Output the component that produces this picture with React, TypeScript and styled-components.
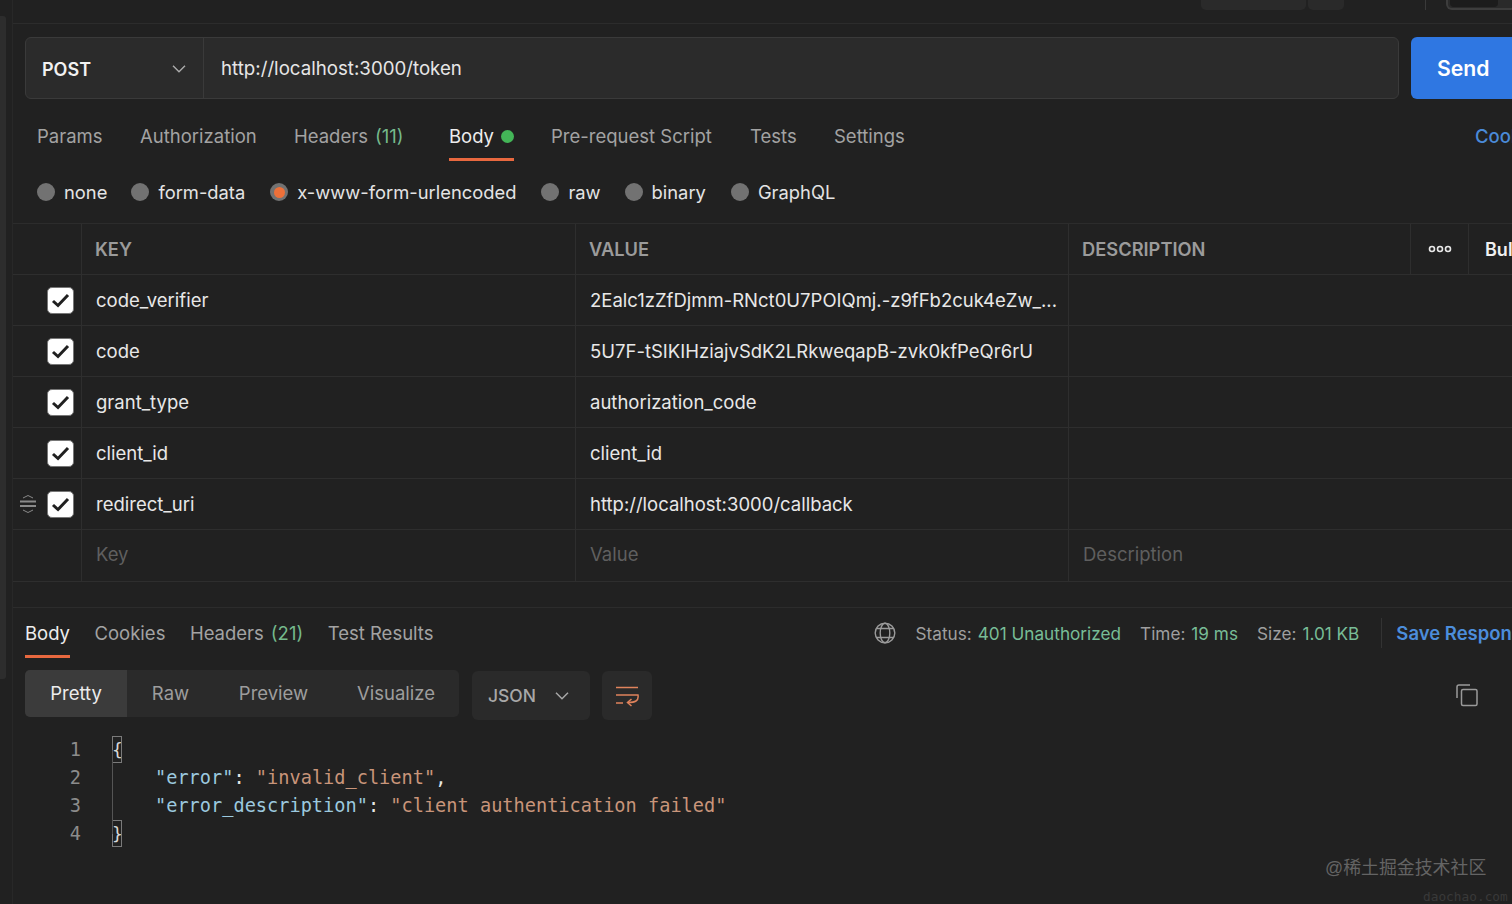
import React from "react";
import styled, { createGlobalStyle } from "styled-components";

const Global = createGlobalStyle`
  html, body { margin: 0; padding: 0; height: 100%; background: #212121; overflow: hidden; }
  body { font-family: Inter, "Liberation Sans", sans-serif; -webkit-font-smoothing: antialiased; }
  #root { height: 904px; }
`;

const line = "#2c2c2c";
const cellLine = "#2e2e2e";

const Page = styled.div`
  position: relative; display: flex; width: 1512px; height: 904px; overflow: hidden; background: #212121;
`;
const Rail = styled.div`
  flex: 0 0 12px; display: flex; border-right: 1px solid #282828; box-sizing: content-box;
`;
const RailBar = styled.div`
  width: 6px; height: 663px; margin-top: 16px; background: #2d2d2d; border-radius: 0 3px 3px 0;
`;
const Main = styled.div`
  flex: 0 0 1499px; width: 1499px; min-width: 0; display: flex; flex-direction: column;
`;
const TopBar = styled.div`
  height: 24px; box-sizing: border-box; flex: none; border-bottom: 1px solid ${line};
  display: flex; justify-content: flex-end; align-items: flex-start; overflow: hidden;
`;
const TopPill = styled.div<{ $w: number; $mr: number }>`
  width: ${(p) => p.$w}px; height: 10px; margin-right: ${(p) => p.$mr}px;
  background: #2a2a2a; border-radius: 0 0 5px 5px;
`;
const TopSep = styled.div`
  width: 1px; height: 10px; background: #3a3a3a; margin-right: 20px;
`;
const TopBox = styled.div`
  width: 70px; height: 10px; margin-right: -4px; box-sizing: border-box;
  background: #2a2a2a; border: 2px solid #3d3d3d; border-top: 0; border-radius: 0 0 6px 6px; padding: 0 14px 0 2px;
  &::before { content: ""; display: block; width: 48px; height: 7px; background: #1c1c1c; border-radius: 0 0 4px 4px; }
`;
const UrlRow = styled.div`
  display: flex; flex: none; margin: 13px 0 0 12px; height: 62px; width: 1600px;
`;
const UrlGroup = styled.div`
  flex: 0 0 1374px; display: flex; box-sizing: border-box; background: #2b2b2b;
  border: 1px solid #3a3a3a; border-radius: 6px; overflow: hidden;
`;
const Method = styled.div`
  flex: 0 0 178px; box-sizing: border-box; display: flex; align-items: center; justify-content: space-between;
  padding: 2px 16px 0 16px; border-right: 1px solid #3a3a3a; color: #f2f2f2; font-size: 18px; font-weight: 600;
`;
const UrlText = styled.div`
  display: flex; align-items: center; padding: 0 0 0 17px; color: #e6e6e6; font-size: 18.7px;
`;
const SendButton = styled.div`
  margin-left: 12px; width: 130px; box-sizing: border-box; background: #2f77e2; border-radius: 6px 0 0 6px;
  color: #fff; font-size: 21.2px; font-weight: 600; display: flex; align-items: center; padding: 0 0 0 26px;
`;
const TabRow = styled.div<{ $h: number; $l: number; $t: number }>`
  display: flex; flex: none; align-items: flex-start; height: ${(p) => p.$h}px;
  margin: ${(p) => p.$t}px 0 0 ${(p) => p.$l}px; white-space: nowrap; width: 1600px;
`;
const Tab = styled.div<{ $active?: boolean; $w?: number; $h?: number }>`
  position: relative; flex: none; width: ${(p) => (p.$w ? p.$w + "px" : "auto")}; height: ${(p) => p.$h ?? 39}px;
  box-sizing: border-box; color: ${(p) => (p.$active ? "#ededed" : "#a3a3a3")}; font-size: 18.5px; line-height: 28px;
  display: flex; align-items: flex-start; gap: 7px;
  ${(p) => p.$active && "border-bottom: 3px solid #e8683f;"}
`;
const Count = styled.span`
  color: #75b98c;
`;
const Dot = styled.span`
  flex: none; width: 13px; height: 13px; margin-top: 8px; border-radius: 50%; background: #43b557;
`;
const CookieLink = styled.div`
  position: absolute; left: 1475px; top: 122px; color: #4a8ad8; font-size: 18.5px; line-height: 28px; font-weight: 500;
`;
const RadioRow = styled.div`
  display: flex; flex: none; align-items: center; margin: 15px 0 0 24px; height: 28px;
`;
const RadioItem = styled.div<{ $ml?: number }>`
  display: flex; align-items: center; gap: 9px; color: #e4e4e4; font-size: 18.35px; white-space: nowrap;
  margin-left: ${(p) => p.$ml ?? 0}px;
`;
const RadioMark = styled.span<{ $on?: boolean }>`
  flex: none; width: 18px; height: 18px; border-radius: 50%; background: #727272; display: flex;
  align-items: center; justify-content: center;
  ${(p) => p.$on && `&::after { content: ""; width: 11px; height: 11px; border-radius: 50%; background: #ee7039; }`}
`;
const Table = styled.div`
  flex: none; margin-top: 17px; width: 1499px; border-top: 1px solid ${line};
`;
const Row = styled.div<{ $h: number }>`
  display: grid; grid-template-columns: 69px 494px 493px 342px 58px 43px; height: ${(p) => p.$h}px;
  box-sizing: border-box; border-bottom: 1px solid ${cellLine};
`;
const Cell = styled.div<{ $pad?: number; $none?: boolean }>`
  display: flex; align-items: center; min-width: 0; box-sizing: border-box; overflow: hidden; white-space: nowrap;
  padding-left: ${(p) => p.$pad ?? 14}px; color: #e8e8e8; font-size: 18.5px;
  ${(p) => !p.$none && `border-right: 1px solid ${cellLine};`}
`;
const HeadCell = styled(Cell)`
  color: #9b9b9b; font-size: 18.3px; font-weight: 600; padding-left: 13px;
`;
const Wide = styled.div`
  grid-column: span 3; display: flex; align-items: center; padding-left: 14px; color: #e8e8e8; font-size: 18.5px;
`;
const Ghost = styled.span`
  color: #5f5f5f; margin-bottom: 3px;
`;
const CheckCell = styled.div`
  display: flex; align-items: center; border-right: 1px solid ${cellLine}; padding-left: 6px; gap: 10px;
`;
const Grip = styled.span`
  flex: none; width: 18px; height: 22px; color: #8a8a8a; display: flex;
`;
const GripGap = styled.span`
  flex: none; width: 18px;
`;
const Check = styled.span`
  flex: none; width: 27px; height: 27px; box-sizing: border-box; border-radius: 5px; background: #fff;
  border: 1px solid #777; display: flex; align-items: center; justify-content: center;
`;
const MoreCell = styled.div`
  display: flex; align-items: center; justify-content: center; border-right: 1px solid ${cellLine}; margin: 0;
`;
const BulkCell = styled.div`
  display: flex; align-items: center; padding-left: 16px; color: #f0f0f0; font-size: 18px; font-weight: 600; overflow: visible; white-space: nowrap;
`;
const ResponseHead = styled.div`
  flex: none; margin-top: 25px; border-top: 1px solid ${line}; height: 63px; box-sizing: border-box;
  display: flex; align-items: flex-start; justify-content: space-between; padding: 11px 0 0 12px; width: 1640px;
`;
const Tabs = styled.div`
  display: flex; gap: 24.5px;
`;
const Meta = styled.div`
  display: flex; align-items: center; height: 28px; margin-right: 120px; color: #9f9f9f; font-size: 17.2px; white-space: nowrap;
`;
const Globe = styled.span`
  display: flex; color: #9a9a9a; margin-right: 20px;
`;
const Stat = styled.span`
  margin-right: 19px;
  b { font-weight: 400; color: #78bd97; margin-left: 6px; }
`;
const Divider = styled.span`
  width: 1px; height: 30px; background: #333; margin: 0 14px 0 3px;
`;
const SaveLink = styled.span`
  color: #4c8ddb; font-size: 18.5px; font-weight: 600;
`;
const Toolbar = styled.div`
  flex: none; display: flex; align-items: flex-start; margin-left: 12px; height: 60px; position: relative;
`;
const Segments = styled.div`
  display: flex; width: 434px; height: 47px; background: #2a2a2a; border-radius: 5px; overflow: hidden;
`;
const Segment = styled.div<{ $active?: boolean; $w: number }>`
  flex: 0 0 ${(p) => p.$w}px; display: flex; align-items: center; justify-content: center;
  background: ${(p) => (p.$active ? "#3b3b3b" : "transparent")};
  color: ${(p) => (p.$active ? "#ececec" : "#9d9d9d")}; font-size: 18.5px; padding-bottom: 1px;
`;
const LangSelect = styled.div`
  margin: 1px 0 0 13px; width: 118px; height: 49px; box-sizing: border-box; background: #2a2a2a; border-radius: 6px;
  display: flex; align-items: center; justify-content: space-between; padding: 0 20px 0 16px;
  color: #a8a8a8; font-size: 17.5px; font-weight: 500;
`;
const WrapButton = styled.div`
  margin: 1px 0 0 12px; width: 50px; height: 49px; background: #2a2a2a; border-radius: 6px;
  display: flex; align-items: center; justify-content: center;
`;
const CopyIcon = styled.span`
  position: absolute; left: 1430px; top: 13px; display: flex; color: #9a9a9a;
`;
const Code = styled.div`
  flex: none; display: flex; margin-top: 6px; font-family: "DejaVu Sans Mono", "Liberation Mono", monospace;
  font-size: 18.62px; line-height: 28px; white-space: pre;
`;
const Gutter = styled.div`
  width: 68px; text-align: right; color: #8c8c8c;
`;
const CodeBody = styled.div`
  position: relative; margin-left: 31px; color: #e6e6e6;
  &::before { content: ""; position: absolute; left: 0; top: 14px; bottom: 14px; width: 1px; background: #555; }
`;
const CodeLine = styled.div``;
const Brace = styled.span`
  display: inline-block; width: 10px; height: 27px; line-height: 26px; overflow: hidden; text-align: center; box-sizing: border-box;
  border: 1px solid #7a7a7a; color: #d8d8d8; font-size: 18px; vertical-align: top; text-indent: -1px;
`;
const CodeKey = styled.span`
  color: #9cc9df; margin-left: 43px;
`;
const CodeStr = styled.span`
  color: #c9957a;
`;
const Mark = styled.div`
  position: absolute; left: 1325px; top: 856px; color: #646464; font-size: 17.9px; line-height: 24px; white-space: nowrap;
  font-family: "Liberation Sans", "Noto Sans CJK SC", sans-serif;
`;
const MarkSub = styled.div`
  position: absolute; left: 1423px; top: 889px; color: #393939; font-size: 12.8px; line-height: 16px; white-space: nowrap;
  font-family: "DejaVu Sans Mono", monospace;
`;

const Chevron = ({ color = "#a8a8a8" }: { color?: string }) => (
  <svg width="16" height="10" viewBox="0 0 16 10" fill="none">
    <path d="M2 1.8 L8 7.8 L14 1.8" stroke={color} strokeWidth="1.5" />
  </svg>
);
const Tick = () => (
  <svg width="19" height="15" viewBox="0 0 19 15" fill="none">
    <path d="M2 8 L7 12.5 L17 2" stroke="#202020" strokeWidth="3" />
  </svg>
);
const GripIcon = () => (
  <svg width="18" height="22" viewBox="0 0 18 22" fill="none" stroke="currentColor">
    <path d="M4 5 L9 2.5 L14 5" strokeWidth="1" />
    <path d="M1 8.5 H17 M1 13 H17" strokeWidth="2" />
    <path d="M4 17 L9 19.5 L14 17" strokeWidth="1" />
  </svg>
);
const MoreIcon = () => (
  <svg width="24" height="8" viewBox="0 0 24 8" fill="none" stroke="#e8e8e8" strokeWidth="1.6">
    <circle cx="4" cy="4" r="2.5" />
    <circle cx="12" cy="4" r="2.5" />
    <circle cx="20" cy="4" r="2.5" />
  </svg>
);
const GlobeIcon = () => (
  <svg width="22" height="22" viewBox="0 0 22 22" fill="none" stroke="currentColor" strokeWidth="1.4">
    <circle cx="11" cy="11" r="9.8" />
    <ellipse cx="11" cy="11" rx="4.8" ry="9.8" />
    <path d="M2.6 6.5 H19.4 M2.6 15.5 H19.4" />
  </svg>
);
const WrapIcon = () => (
  <svg width="24" height="22" viewBox="0 0 24 22" fill="none" stroke="#e0835c" strokeWidth="1.5">
    <path d="M1 2.5 H23 M1 10 H23 C24 16 20 17.5 13 17.5 M1 18 H8" />
    <path d="M16.5 14 L12.5 17.5 L16.5 21" />
  </svg>
);
const CopySvg = () => (
  <svg width="24" height="24" viewBox="0 0 24 24" fill="none" stroke="currentColor" strokeWidth="1.5">
    <path d="M15 2 H4 Q2 2 2 4 V15" />
    <rect x="6.5" y="6.5" width="15.5" height="16" rx="1.5" />
  </svg>
);

const rows: [string, string][] = [
  ["code_verifier", "2Ealc1zZfDjmm-RNct0U7POIQmj.-z9fFb2cuk4eZw_..."],
  ["code", "5U7F-tSIKIHziajvSdK2LRkweqapB-zvk0kfPeQr6rU"],
  ["grant_type", "authorization_code"],
  ["client_id", "client_id"],
  ["redirect_uri", "http://localhost:3000/callback"],
];

export default function App() {
  return (
    <Page>
      <Global />
      <Rail><RailBar /></Rail>
      <Main>
        <TopBar>
          <TopPill $w={105} $mr={2} />
          <TopPill $w={36} $mr={81} />
          <TopSep />
          <TopBox />
        </TopBar>
        <UrlRow>
          <UrlGroup>
            <Method>POST<Chevron /></Method>
            <UrlText>http://localhost:3000/token</UrlText>
          </UrlGroup>
          <SendButton>Send</SendButton>
        </UrlRow>
        <TabRow $h={41} $l={24} $t={23}>
          <Tab $w={103}>Params</Tab>
          <Tab $w={154}>Authorization</Tab>
          <Tab $w={155}>Headers <Count>(11)</Count></Tab>
          <Tab $active $w={65}>Body<Dot /></Tab>
          <Tab $w={37} />
          <Tab $w={199}>Pre-request Script</Tab>
          <Tab $w={84}>Tests</Tab>
          <Tab>Settings</Tab>
        </TabRow>
        <CookieLink>Cookies</CookieLink>
        <RadioRow>
          <RadioItem><RadioMark />none</RadioItem>
          <RadioItem $ml={24}><RadioMark />form-data</RadioItem>
          <RadioItem $ml={25}><RadioMark $on />x-www-form-urlencoded</RadioItem>
          <RadioItem $ml={25}><RadioMark />raw</RadioItem>
          <RadioItem $ml={24}><RadioMark />binary</RadioItem>
          <RadioItem $ml={25}><RadioMark />GraphQL</RadioItem>
        </RadioRow>
        <Table>
          <Row $h={51}>
            <HeadCell />
            <HeadCell>KEY</HeadCell>
            <HeadCell>VALUE</HeadCell>
            <HeadCell>DESCRIPTION</HeadCell>
            <MoreCell><MoreIcon /></MoreCell>
            <BulkCell>Bulk Edit</BulkCell>
          </Row>
          {rows.map(([k, v], i) => (
            <Row $h={51} key={k}>
              <CheckCell>
                {i === 4 ? <Grip><GripIcon /></Grip> : <GripGap />}
                <Check><Tick /></Check>
              </CheckCell>
              <Cell>{k}</Cell>
              <Cell>{v}</Cell>
              <Wide />
            </Row>
          ))}
          <Row $h={52}>
            <CheckCell />
            <Cell><Ghost>Key</Ghost></Cell>
            <Cell><Ghost>Value</Ghost></Cell>
            <Wide><Ghost>Description</Ghost></Wide>
          </Row>
        </Table>
        <ResponseHead>
          <Tabs>
            <Tab $active $h={39}>Body</Tab>
            <Tab>Cookies</Tab>
            <Tab>Headers <Count>(21)</Count></Tab>
            <Tab>Test Results</Tab>
          </Tabs>
          <Meta>
            <Globe><GlobeIcon /></Globe>
            <Stat>Status:<b>401 Unauthorized</b></Stat>
            <Stat>Time:<b>19 ms</b></Stat>
            <Stat>Size:<b>1.01 KB</b></Stat>
            <Divider />
            <SaveLink>Save Response</SaveLink>
          </Meta>
        </ResponseHead>
        <Toolbar>
          <Segments>
            <Segment $active $w={102}>Pretty</Segment>
            <Segment $w={87}>Raw</Segment>
            <Segment $w={119}>Preview</Segment>
            <Segment $w={126}>Visualize</Segment>
          </Segments>
          <LangSelect>JSON<Chevron /></LangSelect>
          <WrapButton><WrapIcon /></WrapButton>
          <CopyIcon><CopySvg /></CopyIcon>
        </Toolbar>
        <Code>
          <Gutter>1{"\n"}2{"\n"}3{"\n"}4</Gutter>
          <CodeBody>
            <CodeLine><Brace>{"{"}</Brace></CodeLine>
            <CodeLine><CodeKey>"error"</CodeKey>: <CodeStr>"invalid_client"</CodeStr>,</CodeLine>
            <CodeLine><CodeKey>"error_description"</CodeKey>: <CodeStr>"client authentication failed"</CodeStr></CodeLine>
            <CodeLine><Brace>{"}"}</Brace></CodeLine>
          </CodeBody>
        </Code>
      </Main>
      <Mark>@稀土掘金技术社区</Mark>
      <MarkSub>daochao.com</MarkSub>
    </Page>
  );
}
